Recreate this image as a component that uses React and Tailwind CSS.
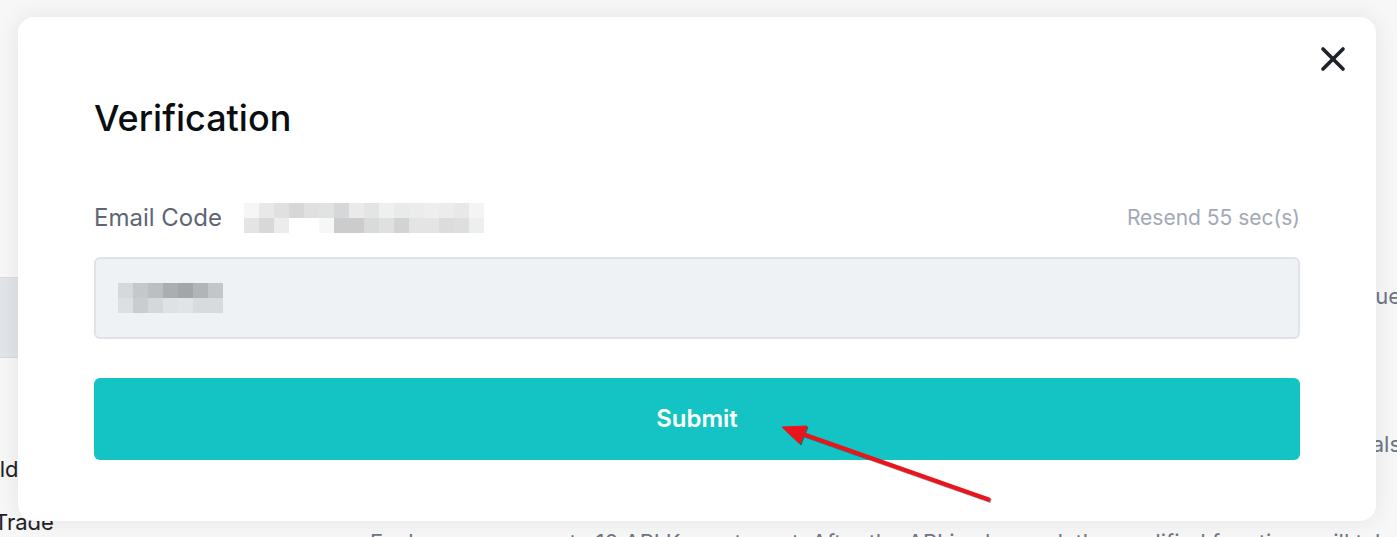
import { X } from 'lucide-react';

const emailBlur = [
  ['#f6f6f6', '#e8e8e8', '#e0e0e0', '#d7d7d7', '#e0e0e0', '#e1e2e2', '#d5d7d8', '#eaeaea', '#e4e4e4', '#eef0ef', '#e9ebeb', '#ececec', '#eeeeee', '#ececec', '#e8e8e8', '#f4f4f4'],
  ['#e4e4e4', '#d7d8d9', '#ececec', '#ffffff', '#ffffff', '#f7f7f7', '#cbcccd', '#cccccd', '#d9dadc', '#dfe0e0', '#d3d3d4', '#e3e4e4', '#e4e4e4', '#dcdcdc', '#dddede', '#edeeee'],
];

const codeBlur = [
  ['#d6d9dc', '#c5c8cb', '#bcbfc2', '#abaeb1', '#a3a6a9', '#b2b5b8', '#c3c6c9'],
  ['#dde0e3', '#cacdd0', '#d5d8db', '#dfe2e5', '#e1e4e7', '#d8dbde', '#d8dbde'],
];

function Pixelated({ rows }) {
  return (
    <div className="flex flex-col">
      {rows.map((row, r) => (
        <div key={r} className="flex">
          {row.map((c, i) => (
            <div key={i} className="w-[15px] h-[15px]" style={{ backgroundColor: c }} />
          ))}
        </div>
      ))}
    </div>
  );
}

function PageBehind() {
  return (
    <div className="flex h-full text-[22px] font-['Inter',sans-serif]">
      <div className="w-[300px] flex flex-col">
        <div className="shrink-0 mt-[277px] h-[81px] bg-[#e9edf1] border-y border-[#dde2e7]" />
        <div className="shrink-0 mt-[95px] -ml-[33px] text-[#1e2329] whitespace-nowrap">Build</div>
        <div className="shrink-0 mt-[20px] -ml-[6px] text-[#1e2329] whitespace-nowrap">Trade</div>
      </div>
      <div className="flex-1 flex flex-col overflow-hidden text-[#707a8a]">
        <div className="shrink-0 mt-[280px] -mr-[4px] text-right whitespace-nowrap">
          Please read the following instructions carefully and confirm the default value
        </div>
        <div className="shrink-0 mt-[115px] -mr-[4px] text-right whitespace-nowrap">
          API keys can be used for trading, querying balances and orders, and als
        </div>
        <div className="shrink-0 mt-[65px] ml-[70px] whitespace-nowrap">
          Each user can create 10 API Keys at most. After the API is changed, the modified functions will take effect
        </div>
      </div>
    </div>
  );
}

export default function App() {
  return (
    <div className="relative w-[1397px] h-[537px] overflow-hidden bg-white">
      <PageBehind />
      <div className="absolute inset-0 bg-black/[0.03]" />

      <div className="absolute left-[18px] top-[17px] w-[1358px] h-[504px] bg-white rounded-[16px] shadow-[0_0_24px_rgba(0,0,0,0.08)] font-['Inter',sans-serif]">
        <button className="absolute right-[23px] top-[22px] text-[#1e2329]">
          <X size={40} strokeWidth={2.2} />
        </button>

        <div className="flex flex-col px-[76px] pt-[79px]">
          <h2 className="text-[36px] leading-[44px] font-medium text-[#0b0e11]">Verification</h2>

          <div className="mt-[63px] flex items-center justify-between h-[30px]">
            <div className="flex items-center gap-[22px]">
              <span className="text-[24px] leading-[30px] text-[#5e6673]">Email Code</span>
              <Pixelated rows={emailBlur} />
            </div>
            <span className="text-[21px] leading-[30px] text-[#a2a9b5]">Resend 55 sec(s)</span>
          </div>

          <div className="mt-[24px] h-[82px] rounded-[6px] bg-[#eef2f5] border-2 border-[#dfe3e8] flex items-center pl-[22px]">
            <Pixelated rows={codeBlur} />
          </div>

          <button className="mt-[39px] h-[82px] rounded-[6px] bg-[#14c3c3] text-white text-[24px] font-semibold">
            Submit
          </button>
        </div>
      </div>

      <svg className="absolute inset-0 pointer-events-none" width="1397" height="537">
        <defs>
          <filter id="sh" x="-10%" y="-10%" width="120%" height="120%">
            <feDropShadow dx="1" dy="1" stdDeviation="0.6" floodColor="#000" floodOpacity="0.45" />
          </filter>
        </defs>
        <g filter="url(#sh)" fill="#e8141b" stroke="#e8141b">
          <line x1="990" y1="500" x2="800" y2="433" strokeWidth="4" />
          <polygon points="782,427 807,426 800,444" strokeWidth="1" />
        </g>
      </svg>
    </div>
  );
}
